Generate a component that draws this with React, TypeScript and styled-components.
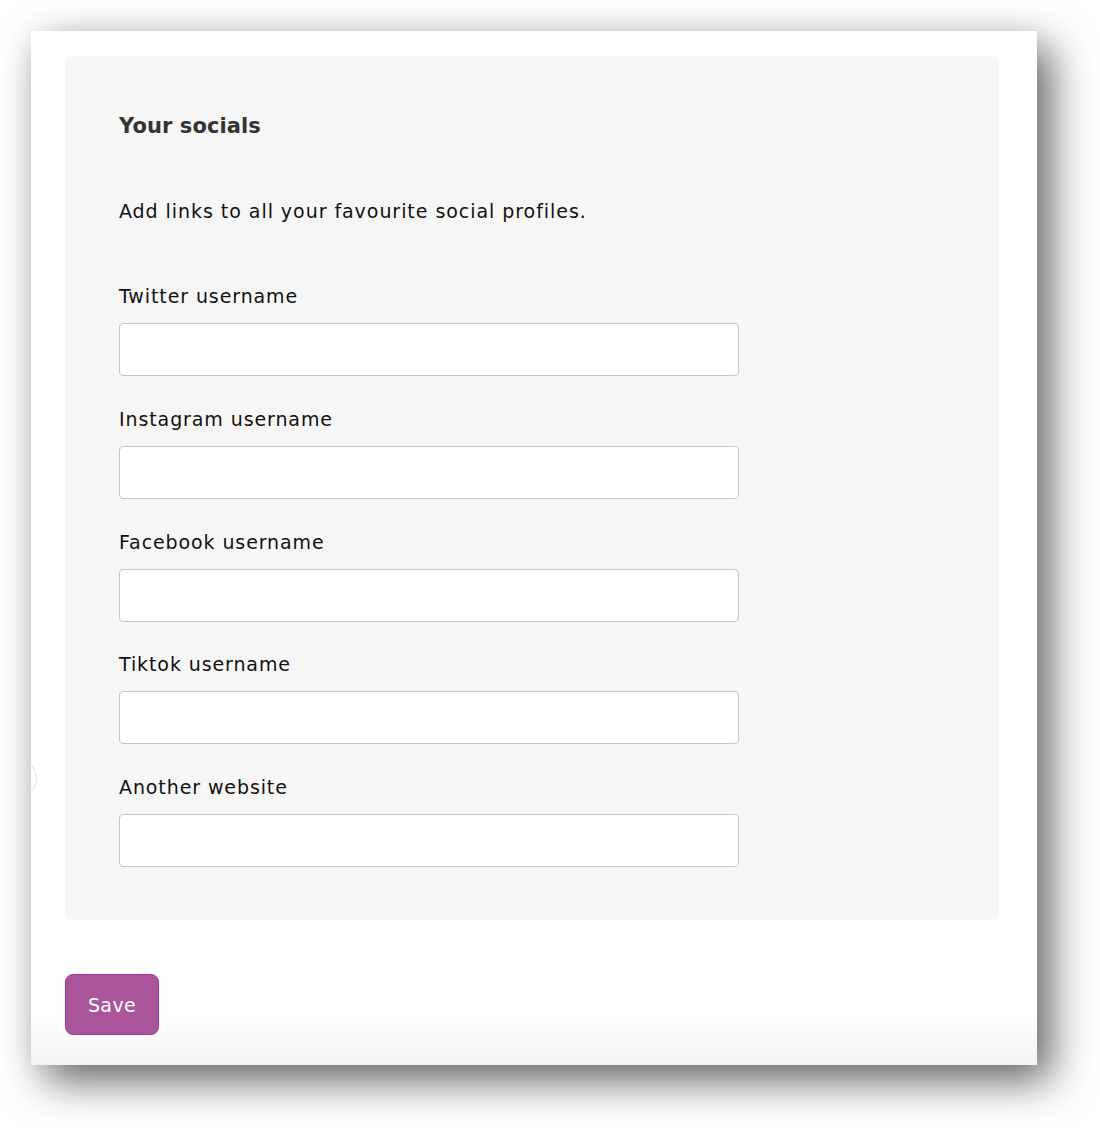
import { createGlobalStyle } from 'styled-components'
import styled from 'styled-components'

const GlobalStyle = createGlobalStyle`
  html, body {
    margin: 0;
    padding: 0;
    background: #ffffff;
  }
  body {
    font-family: 'DejaVu Sans', 'Open Sans', sans-serif;
  }
  * { box-sizing: border-box; }
`

const Page = styled.div`
  width: 1100px;
  height: 1128px;
  padding: 31px 0 0 31px;
  background: #ffffff;
  position: relative;
  overflow: hidden;
`

const Window = styled.div`
  width: 1006px;
  height: 1034px;
  padding: 25px 38px 30px 34px;
  display: flex;
  flex-direction: column;
  background: linear-gradient(to bottom, #ffffff calc(100% - 50px), #f3f3f3 100%);
  box-shadow: 14px 16px 40px rgba(0, 0, 0, 0.6), 0 0 30px rgba(0, 0, 0, 0.05);
  position: relative;
`

const Card = styled.section`
  background: #f6f6f6;
  border-radius: 5px;
  padding: 55px 54px 53px;
  display: flex;
  flex-direction: column;
`

const Heading = styled.h2`
  margin: 0;
  font-size: 21px;
  line-height: 30px;
  font-weight: 700;
  color: #333333;
  letter-spacing: 0.1px;
`

const Intro = styled.p`
  margin: 58px 0 61px;
  font-size: 19px;
  line-height: 24px;
  color: #111111;
  letter-spacing: 0.95px;
`

const Fields = styled.div`
  display: flex;
  flex-direction: column;
  gap: 30.75px;
`

const Field = styled.label`
  display: flex;
  flex-direction: column;
  gap: 15px;
`

const LabelText = styled.span`
  font-size: 19px;
  line-height: 24px;
  color: #111111;
  letter-spacing: 0.9px;
`

const Input = styled.input`
  width: 620px;
  height: 53px;
  border: 1px solid #c6c6c6;
  border-radius: 4px;
  background: #ffffff;
  padding: 0 14px;
  font-size: 18px;
  font-family: inherit;
  outline: none;
`

const Footer = styled.div`
  padding-top: 54px;
`

const SaveButton = styled.button`
  width: 94px;
  height: 61px;
  border-radius: 8px;
  border: 1px solid #a53797;
  background: #aa559a;
  color: #ffffff;
  font-family: inherit;
  font-size: 19px;
  letter-spacing: 0.4px;
  cursor: pointer;
`

const EdgeCircle = styled.div`
  position: absolute;
  left: 2px;
  top: 760px;
  width: 35px;
  height: 37px;
  border-radius: 50%;
  border: 1px solid transparent;
  border-right-color: #e2e2e8;
  z-index: 2;
  pointer-events: none;
`

const fields = [
  'Twitter username',
  'Instagram username',
  'Facebook username',
  'Tiktok username',
  'Another website',
]

export default function App() {
  return (
    <Page>
      <GlobalStyle />
      <EdgeCircle />
      <Window>
        <Card>
          <Heading>Your socials</Heading>
          <Intro>Add links to all your favourite social profiles.</Intro>
          <Fields>
            {fields.map((f) => (
              <Field key={f}>
                <LabelText>{f}</LabelText>
                <Input type="text" />
              </Field>
            ))}
          </Fields>
        </Card>
        <Footer>
          <SaveButton type="button">Save</SaveButton>
        </Footer>
      </Window>
    </Page>
  )
}
